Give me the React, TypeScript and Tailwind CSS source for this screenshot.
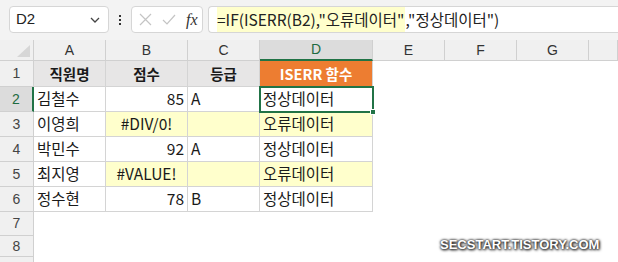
import type { ReactNode } from "react";

const KR = "font-['Noto_Sans_CJK_KR','Liberation_Sans',sans-serif]";

type Cell = {
  text?: string;
  align?: "left" | "center" | "right";
  bold?: boolean;
  fill?: "head" | "orange" | "yellow";
};

const rows: Cell[][] = [
  [
    { text: "직원명", align: "center", bold: true, fill: "head" },
    { text: "점수", align: "center", bold: true, fill: "head" },
    { text: "등급", align: "center", bold: true, fill: "head" },
    { text: "ISERR 함수", align: "center", bold: true, fill: "orange" },
  ],
  [{ text: "김철수" }, { text: "85", align: "right" }, { text: "A" }, { text: "정상데이터" }],
  [
    { text: "이영희" },
    { text: "#DIV/0!", align: "center", fill: "yellow" },
    { fill: "yellow" },
    { text: "오류데이터", fill: "yellow" },
  ],
  [{ text: "박민수" }, { text: "92", align: "right" }, { text: "A" }, { text: "정상데이터" }],
  [
    { text: "최지영" },
    { text: "#VALUE!", align: "center", fill: "yellow" },
    { fill: "yellow" },
    { text: "오류데이터", fill: "yellow" },
  ],
  [{ text: "정수현" }, { text: "78", align: "right" }, { text: "B" }, { text: "정상데이터" }],
];

const cols = ["A", "B", "C", "D", "E", "F", "G", ""];

function TableCell({ cell }: { cell: Cell }): ReactNode {
  const fill =
    cell.fill === "head"
      ? "bg-[#e7e6e6]"
      : cell.fill === "orange"
        ? "bg-[#ed7d31] text-white"
        : cell.fill === "yellow"
          ? "bg-[#ffffcc]"
          : "bg-white";
  const align =
    cell.align === "center" ? "justify-center" : cell.align === "right" ? "justify-end pr-[3px]" : "justify-start pl-[3px]";
  return (
    <div
      className={`flex items-center border-r border-b border-[#d4d4d4] text-[#1a1a1a] ${fill} ${align} ${
        cell.bold ? "text-[14.5px] font-bold" : "text-[15.5px]"
      }`}
    >
      {cell.text}
    </div>
  );
}

function Toolbar(): ReactNode {
  return (
    <div className="flex h-[40px] items-start bg-[#f3f3f3] pt-[6px]">
      <div className="ml-[9px] flex h-[27px] w-[100px] items-center justify-between rounded-[4px] border border-[#d6d6d6] bg-white pl-[6px] pr-[8px] text-[15px] text-[#222]">
        <span className="font-['Liberation_Sans',sans-serif]">D2</span>
        <svg width="10" height="6" viewBox="0 0 10 6" fill="none" stroke="#444" strokeWidth="1.3">
          <path d="M1 1l4 4 4-4" />
        </svg>
      </div>
      <div className="flex h-[27px] w-[22px] flex-col items-center justify-center gap-[2px]">
        <span className="h-[2px] w-[2px] bg-[#333]" />
        <span className="h-[2px] w-[2px] bg-[#333]" />
        <span className="h-[2px] w-[2px] bg-[#333]" />
      </div>
      <div className="flex h-[27px] w-[72px] items-center rounded-[4px] border border-[#d6d6d6] bg-white pl-[7px]">
        <svg width="13" height="13" viewBox="0 0 13 13" fill="none" stroke="#c4c4c4" strokeWidth="1.2">
          <path d="M1 1l11 11M12 1L1 12" />
        </svg>
        <svg className="ml-[10px]" width="14" height="11" viewBox="0 0 14 11" fill="none" stroke="#c4c4c4" strokeWidth="1.2">
          <path d="M1 6l4 4 8-9" />
        </svg>
        <span className="ml-[10px] font-['Liberation_Serif',serif] text-[16px] italic text-[#333]">fx</span>
      </div>
      <div className="ml-[5px] flex h-[27px] flex-1 items-center rounded-l-[4px] border border-r-0 border-[#d6d6d6] bg-white pl-[8px]">
        <span className={`${KR} flex h-[25px] items-center whitespace-nowrap text-[15.5px] text-[#222]`}>
          <span className="flex h-full items-center bg-[#ffffcc] pr-[1px]">=IF(ISERR(B2),"오류데이터"</span>
          <span>,"정상데이터")</span>
        </span>
      </div>
    </div>
  );
}

export default function App(): ReactNode {
  return (
    <div className={`relative h-[262px] w-[618px] overflow-hidden bg-white ${KR}`}>
      <Toolbar />
      <div className="grid grid-cols-[34px_72px_82px_72px_113px_72px_72px_72px_1fr] grid-rows-[21px_26px_25px_25px_25px_25px_25px_24px_21px_20px]">
        <div className="relative border-r border-b border-[#d0d0d0] bg-[#f0f0f0]">
          <svg className="absolute bottom-[3px] right-[3px]" width="13" height="12" viewBox="0 0 13 12">
            <path d="M13 0V12H0Z" fill="#d6d6d6" />
          </svg>
        </div>
        {cols.map((c) => (
          <div
            key={c || "h"}
            className={`flex items-center justify-center border-r font-['Liberation_Sans',sans-serif] text-[14px] ${
              c === "D"
                ? "border-b-2 border-r-[#d0d0d0] border-b-[#217346] bg-[#dcdcdc] text-[#1e6b41]"
                : "border-b border-[#d0d0d0] bg-[#f0f0f0] text-[#333]"
            }`}
          >
            {c}
          </div>
        ))}
        {Array.from({ length: 9 }, (_, i) => {
          const r = i + 1;
          const cells = rows[i];
          return [
            <div
              key={`h${r}`}
              className={`flex items-center justify-center border-b border-[#d0d0d0] font-['Liberation_Sans',sans-serif] text-[14px] ${
                r === 2
                  ? "border-r-2 border-r-[#217346] bg-[#dcdcdc] text-[#1e6b41]"
                  : "border-r border-r-[#d0d0d0] bg-[#f0f0f0] text-[#444]"
              }`}
            >
              {r < 9 ? r : ""}
            </div>,
            ...(cells
              ? cells.map((cell, j) => <TableCell key={`${r}-${j}`} cell={cell} />)
              : Array.from({ length: 4 }, (_, j) => <div key={`${r}-${j}`} className="bg-white" />)),
            <div key={`${r}-e`} className="bg-white" />,
            <div key={`${r}-f`} className="bg-white" />,
            <div key={`${r}-g`} className="bg-white" />,
            <div key={`${r}-h`} className="bg-white" />,
          ];
        })}
      </div>
      {/* active cell D2 */}
      <div className="absolute left-[259px] top-[86px] h-[27px] w-[115px] border-2 border-[#217346]">
        <span className="absolute -bottom-[4px] -right-[4px] h-[6px] w-[6px] border border-white bg-[#217346]" />
      </div>
      <div className="absolute left-[440px] top-[238px] font-['Liberation_Sans',sans-serif] text-[13px] leading-[14px] font-bold text-white [text-shadow:0_0_2px_#333,0_0_3px_#333,1px_1px_3px_#000]">
        SECSTART.TISTORY.COM
      </div>
    </div>
  );
}
